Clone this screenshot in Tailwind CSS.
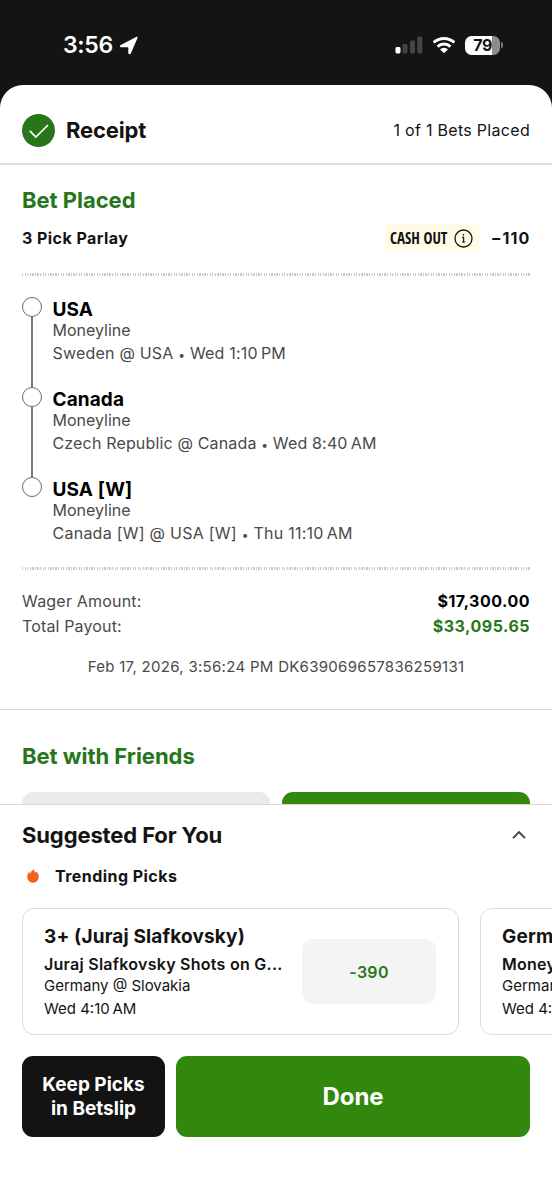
<!DOCTYPE html>
<html lang="en">
<head>
<meta charset="utf-8">
<meta name="viewport" content="width=device-width, initial-scale=1">
<title>Receipt</title>
<script src="https://cdn.jsdelivr.net/npm/@tailwindcss/browser@4"></script>
</head>
<body class="bg-[#141414] font-[Inter,sans-serif] text-[#131313]">
<div class="flex h-[1200px] w-[552px] flex-col overflow-hidden">

  <!-- Status bar -->
  <div class="flex h-[85px] shrink-0 items-center pt-[5px] pr-[49px] pl-[63px] text-white">
    <span class="text-[23px] leading-7 font-semibold tracking-[-0.3px]">3:56</span>
    <svg class="ml-[6px]" width="19" height="19" viewBox="0 0 19 19" fill="currentColor"><path d="M1.800 9.100 17.100 1c1-.5 1.700.3 1.300 1.200L11.800 17.400c-.6 1.300-2.500 1-2.500-.5v-4.900c0-.5-.2-.7-.7-.7H2.400C.6 11.300.300 9.900 1.800 9.100z"/></svg>
    <div class="ml-auto flex items-center">
      <svg width="28" height="18" viewBox="0 0 28 18"><rect x=".5" y="11" width="5" height="6.500" rx="1.400" fill="#fff"/><g fill="#444"><rect x="7.500" y="8" width="5" height="9.500" rx="1.400"/><rect x="15" y="4.500" width="5" height="13" rx="1.400"/><rect x="22.300" y=".5" width="5" height="17" rx="1.400"/></g></svg>
      <svg class="ml-[9px]" width="24" height="18" viewBox="0 0 24 18"><g fill="none" stroke="#fff" stroke-width="3"><path d="M1.700 6.500a15 15 0 0 1 20.600 0"/><path d="M5.600 10.600a9.300 9.300 0 0 1 12.800 0"/></g><path d="M12 17.300 8 13.400a5.700 5.700 0 0 1 8 0z" fill="#fff"/></svg>
      <div class="ml-[9px] flex h-[19px] w-[35px] items-center justify-center rounded-[6.5px] bg-[linear-gradient(90deg,#fff_78%,#8c8c8c_78%)] text-[16px] leading-none font-bold tracking-[-0.6px] text-[#141414]">79</div>
      <div class="ml-px h-[6px] w-[2px] rounded-r-full bg-[#777]"></div>
    </div>
  </div>

  <div class="flex grow flex-col rounded-t-[23px] bg-white">
    <!-- Header -->
    <div class="flex h-[80px] shrink-0 items-center border-b-2 border-[#e0e0e0] px-[22px] pt-[13px]">
      <svg width="33" height="33" viewBox="0 0 33 33"><circle cx="16.500" cy="16.500" r="16.500" fill="#27761a"/><path d="m7.800 16.800 6.100 6.300L26 11" fill="none" stroke="#fff" stroke-width="1.700"/></svg>
      <h1 class="mb-[2px] ml-[11px] text-[22px] leading-7 font-bold tracking-[-0.15px]">Receipt</h1>
      <span class="mb-px ml-auto text-[16px] leading-6 tracking-[0.3px]">1 of 1 Bets Placed</span>
    </div>

    <!-- Bet summary -->
    <section class="shrink-0 px-[22px] pt-[21px]">
      <h2 class="text-[22px] leading-7 font-bold tracking-[-0.03px] text-[#27761a]">Bet Placed</h2>
      <div class="mt-[10px] flex h-7 items-center">
        <span class="text-[16px] font-bold tracking-[0.45px]">3 Pick Parlay</span>
        <div class="ml-auto flex h-7 w-[95px] items-center justify-between rounded-[4px] bg-[#fffbe8] pr-[7px] pl-[5px]">
          <span class="w-[58px] origin-left scale-x-[0.94] font-['Open_Sans_Condensed',sans-serif] text-[16px] leading-7 font-bold whitespace-nowrap">CASH OUT</span>
          <svg width="19" height="19" viewBox="0 0 19 19" fill="none" stroke="#131313"><circle cx="9.500" cy="9.500" r="8.500" stroke-width="1.300"/><path d="M8 8.300h1.600v4.600M8 13h3.200" stroke-width="1.200"/><circle cx="9.500" cy="5.800" r=".6" fill="#131313" stroke-width=".5"/></svg>
        </div>
        <span class="-mr-[0.5px] ml-[11px] text-[16px] font-bold tracking-[1.1px]">−110</span>
      </div>
      <div class="mt-[21px] h-[2.5px] bg-[repeating-linear-gradient(90deg,#cacaca_0_1.28px,#fff_1.28px_2.57px)]"></div>

      <!-- Parlay legs -->
      <ol class="mt-[21.5px]">
        <li class="flex h-[90px] gap-[11px]">
          <div class="flex w-[19.5px] flex-col items-center"><i class="size-[19.5px] shrink-0 rounded-full border-[1.5px] border-[#6b6b6b]"></i><i class="w-[1.5px] grow bg-[#7a7a7a]"></i></div>
          <div><h3 class="pt-[2px] text-[19px] leading-[22px] font-bold tracking-[0.1px] text-black">USA</h3><p class="-mt-[2px] text-[16px] leading-[22px] text-[#4a4a4a]">Moneyline</p><p class="mt-px text-[16px] leading-[22px] tracking-[0.2px] text-[#4a4a4a]">Sweden @ USA <span class="text-[12px]">•</span> Wed 1:10&#8201;PM</p></div>
        </li>
        <li class="flex h-[90px] gap-[11px]">
          <div class="flex w-[19.5px] flex-col items-center"><i class="size-[19.5px] shrink-0 rounded-full border-[1.5px] border-[#6b6b6b]"></i><i class="w-[1.5px] grow bg-[#7a7a7a]"></i></div>
          <div><h3 class="pt-[2px] text-[19px] leading-[22px] font-bold tracking-[0.1px] text-black">Canada</h3><p class="-mt-[2px] text-[16px] leading-[22px] text-[#4a4a4a]">Moneyline</p><p class="mt-px text-[16px] leading-[22px] tracking-[0.16px] text-[#4a4a4a]">Czech Republic @ Canada <span class="text-[12px]">•</span> Wed 8:40&#8201;AM</p></div>
        </li>
        <li class="flex h-[67px] gap-[11px]">
          <div class="flex w-[19.5px] flex-col items-center"><i class="size-[19.5px] shrink-0 rounded-full border-[1.5px] border-[#6b6b6b]"></i></div>
          <div><h3 class="pt-[2px] text-[19px] leading-[22px] font-bold tracking-[0.15px] text-black">USA [W]</h3><p class="-mt-[2px] text-[16px] leading-[22px] text-[#4a4a4a]">Moneyline</p><p class="mt-px text-[16px] leading-[22px] tracking-[0.25px] text-[#4a4a4a]">Canada [W] @ USA [W] <span class="text-[12px]">•</span> Thu 11:10&#8201;AM</p></div>
        </li>
      </ol>
      <div class="mt-[23px] h-[2.5px] bg-[repeating-linear-gradient(90deg,#cacaca_0_1.28px,#fff_1.28px_2.57px)]"></div>

      <div class="mt-[18.5px] flex justify-between text-[16px] leading-[26px]"><span class="tracking-[0.2px] text-[#4a4a4a]">Wager Amount:</span><span class="font-bold tracking-[0.5px] text-black">$17,300.00</span></div>
      <div class="flex justify-between text-[16px] leading-6"><span class="tracking-[0.15px] text-[#4a4a4a]">Total Payout:</span><span class="font-bold tracking-[0.5px] text-[#27761a]">$33,095.65</span></div>
      <p class="mt-[18px] text-center text-[15px] leading-[22px] tracking-[0.29px] whitespace-nowrap text-[#4a4a4a]">Feb 17, 2026, 3:56:24 PM DK639069657836259131</p>
    </section>

    <!-- Bet with Friends, partly covered by the panel -->
    <section class="mt-[31px] h-[95px] shrink-0 overflow-hidden border-t-[1.5px] border-[#d8d8d8] px-[22px] pt-[32px]">
      <h2 class="text-[22px] leading-7 font-bold tracking-[-0.03px] text-[#27761a]">Bet with Friends</h2>
      <div class="mt-[22px] flex gap-[11.5px]"><div class="h-16 flex-1 rounded-[11px] bg-[#ebebeb]"></div><div class="h-16 flex-1 rounded-[11px] bg-[#32880d]"></div></div>
    </section>

    <!-- Suggestions panel -->
    <section class="grow border-t-[1.5px] border-[#d8d8d8] px-[22px] pt-4">
      <div class="flex items-center justify-between"><h2 class="text-[22px] leading-7 font-bold tracking-[-0.12px]">Suggested For You</h2>
        <svg class="mr-[3px]" width="16" height="10" viewBox="0 0 16 10"><path d="M2 8.200 8 2.100l6 6.100" fill="none" stroke="#444" stroke-width="1.900"/></svg></div>
      <div class="mt-[15px] flex h-6 items-center pl-[5px]">
        <svg width="12" height="14" viewBox="0 0 12 14"><path d="M6.900.4C7.100 2 8 2.800 8.800 3.700c.3-.4.500-.7.600-1.100C11 4.200 11.700 6 11.700 8c0 3.400-2.400 5.700-5.700 5.700S.3 11.400.3 8C.3 6 1 4.200 2.400 2.800c.1.900.4 1.400.9 1.900C3.700 2.800 4.800 1.200 6.900.4z" fill="#f5601b"/></svg>
        <span class="ml-4 text-[16px] font-bold tracking-[0.45px]">Trending Picks</span>
      </div>
      <div class="mt-5 -mr-[22px] flex gap-[21px] overflow-hidden">
        <article class="flex h-[127px] w-[437px] shrink-0 items-start rounded-[12px] border-[1.5px] border-[#dcdcdc] pt-4 pr-[21px] pl-[21px]">
          <div class="w-[258px] whitespace-nowrap">
            <h3 class="text-[19px] leading-6 font-bold tracking-[0.15px]">3+ (Juraj Slafkovsky)</h3>
            <p class="mt-1 text-[16px] leading-[22px] font-semibold tracking-[0.26px]">Juraj Slafkovsky Shots on G...</p>
            <p class="text-[15px] leading-[21px]">Germany @ Slovakia</p>
            <p class="mt-[2px] text-[15px] leading-[22px]">Wed 4:10&#8201;AM</p>
          </div>
          <div class="mt-[14px] flex h-[65px] w-[134px] items-center justify-center rounded-[11px] bg-[#f4f4f4] text-[16px] font-semibold tracking-[0.3px] text-[#27761a]">-390</div>
        </article>
        <article class="h-[127px] w-[437px] shrink-0 rounded-[12px] border-[1.5px] border-[#dcdcdc] px-[21px] pt-4 whitespace-nowrap">
          <h3 class="text-[19px] leading-6 font-bold tracking-[0.15px]">Germany</h3>
          <p class="mt-1 text-[16px] leading-[22px] font-semibold tracking-[0.26px]">Moneyline</p>
          <p class="text-[15px] leading-[21px]">Germany @ Slovakia</p>
          <p class="mt-[2px] text-[15px] leading-[22px]">Wed 4:10&#8201;AM</p>
        </article>
      </div>
      <div class="mt-[21px] flex h-[81px] gap-[11px] text-white">
        <button class="w-[143px] rounded-[11px] bg-[#131313] text-[19px] leading-[23.5px] font-bold">Keep Picks<br>in Betslip</button>
        <button class="grow rounded-[11px] bg-[#32880d] text-[24px] font-bold tracking-[-0.1px]">Done</button>
      </div>
    </section>
  </div>
</div>
</body>
</html>
